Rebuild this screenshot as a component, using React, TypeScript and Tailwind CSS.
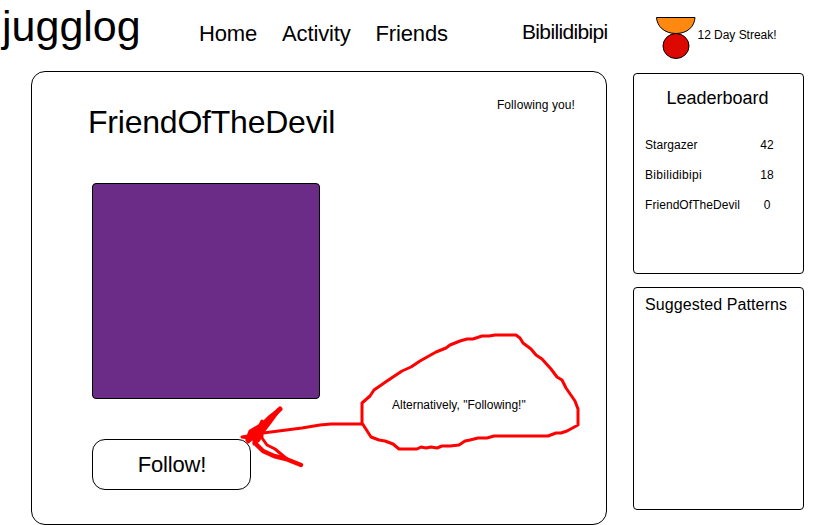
const leaders = [
  { name: "Stargazer", score: 42, tracking: "tracking-[0.05px]" },
  { name: "Bibilidibipi", score: 18, tracking: "tracking-[0.3px]" },
  { name: "FriendOfTheDevil", score: 0, tracking: "tracking-[0.06px]" },
];

function Header() {
  return (
    <header className="flex h-[71px] items-start leading-none whitespace-nowrap">
      <h1 className="mt-[5px] w-[199px] pl-[2px] text-[43px] leading-none">jugglog</h1>
      <nav className="mt-[23px] flex w-[323px] gap-[25px] text-[22px] leading-none tracking-[-0.15px]">
        <a>Home</a>
        <a>Activity</a>
        <a>Friends</a>
      </nav>
      <span className="mt-[21px] w-[134px] text-[21px] leading-none tracking-[-0.65px]">Bibilidibipi</span>
      <StreakIcon />
      <span className="mt-[29px] ml-[1.5px] text-[12px] leading-none tracking-[-0.03px]">12 Day Streak!</span>
    </header>
  );
}

function StreakIcon() {
  return (
    <svg className="mt-[16px] shrink-0" width="40" height="44" viewBox="0 0 40 44">
      <path d="M.5 1.5H39C38.5 10.5 31.5 17.5 20 17.5S1 10.5.5 1.5Z" fill="#ff8811" stroke="#000" />
      <ellipse cx="20" cy="30" rx="13" ry="12.5" fill="#dd0800" stroke="#000" />
    </svg>
  );
}

function Note() {
  return (
    <div className="pointer-events-none absolute inset-0">
      <svg className="absolute inset-0" width="817" height="525" viewBox="0 0 817 525" fill="none" stroke="#ff0000" strokeWidth="3" strokeLinejoin="round" strokeLinecap="round">
        <path d="M362 403L370 396 374 390 387 381 402 371 411 367 420 361 436 352 446 348 450 345 460 341 467 339 473 339 482 336 489 336 495 335H516L520 338 523 343 531 349 536 355 542 359 551 369 557 377 562 380 566 388 575 401 578 409V425L567 431 561 433 556 433 548 436H494L487 438 478 438 470 440 465 441 459 445 450 446 442 446 437 448 431 447 426 448 421 447 417 449H399L393 444 385 441 379 440 371 437 362 423Z" />
        <path d="M362 424H331L320 425 302 428 263 433" />
        <path d="M280 409L269 417 263 423 262 421 260 425 257 427 250 431 248 436 242 437 248 438 248 442 254 437 254 444 259 440 262 433 269 424Z" fill="#ff0000" />
        <path d="M280 409L266 422M252 434L248 440" strokeWidth="5" />
        <path d="M262 433V438L267 445 275 449 281 454 287 459" />
        <path d="M255 443L263 451 274 456 286 459 301 465" strokeWidth="4.5" />
      </svg>
      <p className="absolute top-[399px] left-[392px] text-[12px] leading-none whitespace-nowrap">Alternatively, "Following!"</p>
    </div>
  );
}

export default function App() {
  return (
    <div className="relative h-[525px] w-[817px] overflow-hidden bg-white font-['Liberation_Sans',Arial,sans-serif] text-black">
      <Header />
      <div className="flex items-start pl-[31px]">
        <main className="h-[454px] w-[576px] rounded-[14px] border border-black pl-[60px]">
          <div className="flex items-start justify-between pr-[31px]">
            <h2 className="-ml-[4px] pt-[34px] text-[32px] leading-none tracking-[-0.22px]">FriendOfTheDevil</h2>
            <span className="mt-[27px] text-[12px] leading-none tracking-[0.1px]">Following you!</span>
          </div>
          <div className="mt-[45px] h-[216px] w-[228px] rounded-[4px] border border-black bg-[#6a2c87]" />
          <button className="mt-[40px] block h-[51px] w-[159px] rounded-[13px] border border-black pl-px text-[22px] leading-none tracking-[-0.15px]">Follow!</button>
        </main>
        <aside className="mt-[2px] ml-[26px] flex w-[171px] flex-col gap-[13px]">
          <section className="h-[201px] rounded-[4px] border border-black">
            <h3 className="mt-[15px] pr-[2px] text-center text-[18px] leading-none">Leaderboard</h3>
            <ul className="mt-[23px] pl-[11px] text-[12px]">
              {leaders.map((leader) => (
                <li key={leader.name} className="flex h-[30px] items-center leading-none">
                  <span className={`w-[112px] ${leader.tracking}`}>{leader.name}</span>
                  <span className="w-[20px] text-center">{leader.score}</span>
                </li>
              ))}
            </ul>
          </section>
          <section className="h-[223px] rounded-[4px] border border-black pt-[9px] pl-[11px]">
            <h3 className="text-[16px] leading-none tracking-[0.08px]">Suggested Patterns</h3>
          </section>
        </aside>
      </div>
      <Note />
    </div>
  );
}
